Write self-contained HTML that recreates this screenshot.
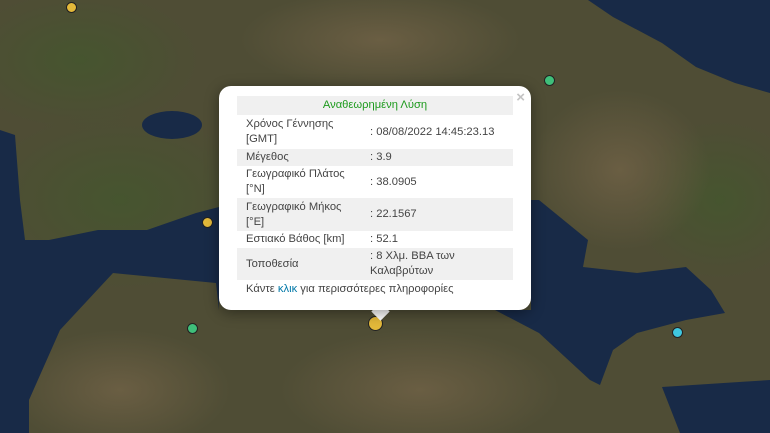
<!DOCTYPE html>
<html><head><meta charset="utf-8"><style>
html,body{margin:0;padding:0;width:770px;height:433px;overflow:hidden;font-family:"Liberation Sans",sans-serif}
#map{position:absolute;left:0;top:0;width:770px;height:433px;background:#4f4d35}
.pop{position:absolute;left:219px;top:86px;width:312px;height:224px;background:#fff;border-radius:12px;box-shadow:0 3px 14px rgba(0,0,0,.4)}
.tip{position:absolute;left:374px;top:305px;width:13px;height:13px;background:#fff;transform:rotate(45deg)}
.x{position:absolute;right:6px;top:3px;color:#c3c3c3;font-size:15px;font-weight:bold}
table{position:absolute;left:18px;top:10px;width:276px;border-collapse:collapse;font-size:11.2px;color:#444}
td{padding:0 0 0 9px;line-height:15px;vertical-align:middle}
tr.g td{background:#f0f0f0}
td.v{padding-left:0;width:143px}
.ft{position:absolute;left:27px;top:197px;font-size:11.2px;color:#444}
.ft span{color:#0078a8}
.dot{position:absolute;border-radius:50%;border:1px solid #222}
</style></head><body>
<div id="map">
<svg width="770" height="433" style="position:absolute;left:0;top:0">
<defs>
<radialGradient id="g1"><stop offset="0" stop-color="#46552f"/><stop offset="1" stop-color="#46552f" stop-opacity="0"/></radialGradient>
<radialGradient id="g2"><stop offset="0" stop-color="#6a5e43"/><stop offset="1" stop-color="#6a5e43" stop-opacity="0"/></radialGradient>
</defs>
<ellipse cx="120" cy="200" rx="140" ry="90" fill="url(#g1)"/>
<ellipse cx="80" cy="60" rx="120" ry="70" fill="url(#g1)"/>
<ellipse cx="720" cy="200" rx="90" ry="80" fill="url(#g1)"/>
<ellipse cx="120" cy="390" rx="110" ry="60" fill="url(#g2)"/>
<ellipse cx="420" cy="390" rx="140" ry="60" fill="url(#g2)"/>
<ellipse cx="620" cy="170" rx="90" ry="80" fill="url(#g2)"/>
<ellipse cx="380" cy="40" rx="140" ry="50" fill="url(#g2)"/>
<g fill="#182a47">
<polygon points="0,130 15,135 20,200 25,240 49,240 98,230 147,230 196,213 219,207 219,310 216,283 113,273 60,330 29,400 29,433 0,433"/>
<polygon points="531,200 539,200 588,240 583,267 637,273 686,267 711,290 725,313 686,320 637,333 613,350 600,385 590,380 539,333 495,310 531,310"/>
<polygon points="662,387 770,380 770,433 680,433"/>
<polygon points="588,0 613,17 662,43 696,67 735,83 770,93 770,0"/>
<ellipse cx="172" cy="125" rx="30" ry="14"/>
</g>
</svg>
<div class="dot" style="left:66px;top:2px;width:9px;height:9px;background:#e3b93a"></div>
<div class="dot" style="left:202px;top:217px;width:9px;height:9px;background:#e3b93a"></div>
<div class="dot" style="left:544px;top:75px;width:9px;height:9px;background:#3fbf7a"></div>
<div class="dot" style="left:187px;top:323px;width:9px;height:9px;background:#3fbf7a"></div>
<div class="dot" style="left:672px;top:327px;width:9px;height:9px;background:#3fc8e0"></div>
<div class="dot" style="left:368px;top:316px;width:13px;height:13px;background:#e3b93a"></div>
</div>
<div class="tip"></div>
<div class="pop">
<div class="x">×</div>
<table>
<tr class="g"><td colspan="2" style="text-align:center;color:#1d9a1d;height:19px;padding:0">Αναθεωρημένη Λύση</td></tr>
<tr><td style="height:34px">Χρόνος Γέννησης<br>[GMT]</td><td class="v">: 08/08/2022 14:45:23.13</td></tr>
<tr class="g"><td style="height:17px">Μέγεθος</td><td class="v">: 3.9</td></tr>
<tr><td style="height:32px">Γεωγραφικό Πλάτος<br>[°N]</td><td class="v">: 38.0905</td></tr>
<tr class="g"><td style="height:33px">Γεωγραφικό Μήκος<br>[°E]</td><td class="v">: 22.1567</td></tr>
<tr><td style="height:17px">Εστιακό Βάθος [km]</td><td class="v">: 52.1</td></tr>
<tr class="g"><td style="height:32px">Τοποθεσία</td><td class="v">: 8 Χλμ. ΒΒΑ των<br>Καλαβρύτων</td></tr>
</table>
<div class="ft">Κάντε <span>κλικ</span> για περισσότερες πληροφορίες</div>
</div>
</body></html>
